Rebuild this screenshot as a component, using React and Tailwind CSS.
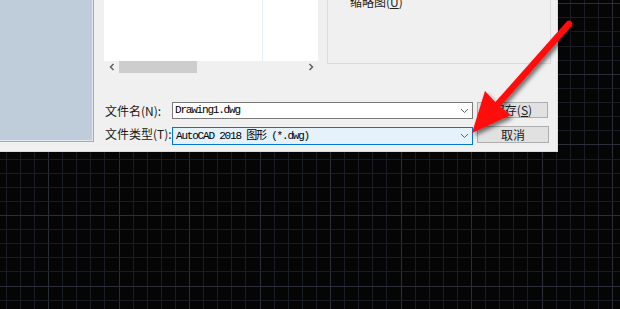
import React from 'react';

const cjk = { fontFamily: '"Noto Sans CJK SC", "Noto Sans", sans-serif' };
const mono = { fontFamily: '"Liberation Mono", "Noto Sans CJK SC", monospace' };

const Chevron = () => (
  <svg width="9" height="6" viewBox="0 0 9 6" className="shrink-0">
    <path d="M1 1 L4.5 4.5 L8 1" fill="none" stroke="#606060" strokeWidth="1" />
  </svg>
);

const Grid = () => {
  const xs = [];
  const ys = [];
  for (let j = -5; j < 46; j++) xs.push({ v: 48 + j * 14.1, major: j % 5 === 0 });
  for (let j = -5; j < 24; j++) ys.push({ v: 3.2 + j * 14.12, major: j % 5 === 0 });
  return (
    <svg className="absolute inset-0" width="620" height="309">
      {xs.map((l, i) => (
        <line key={'x' + i} x1={Math.round(l.v) + 0.5} y1="0" x2={Math.round(l.v) + 0.5} y2="309" stroke={l.major ? '#2b2e39' : '#1a1c23'} strokeWidth="1" />
      ))}
      {ys.map((l, i) => (
        <line key={'y' + i} x1="0" y1={Math.round(l.v) + 0.5} x2="620" y2={Math.round(l.v) + 0.5} stroke={l.major ? '#2b2e39' : '#1a1c23'} strokeWidth="1" />
      ))}
    </svg>
  );
};

const Arrow = () => (
  <svg className="absolute inset-0 pointer-events-none" width="620" height="309">
    <defs>
      <filter id="sh" x="-20%" y="-20%" width="150%" height="150%">
        <feDropShadow dx="2" dy="3" stdDeviation="2" floodColor="#000" floodOpacity="0.55" />
      </filter>
    </defs>
    <g filter="url(#sh)" fill="#ff0a0a">
      <line x1="569" y1="24" x2="498" y2="104" stroke="#ff0a0a" strokeWidth="6.5" strokeLinecap="round" />
      <polygon points="472,133 485,91 498,105 511,115" />
    </g>
  </svg>
);

export default function App() {
  return (
    <div className="relative w-[620px] h-[309px] overflow-hidden bg-[#050506]">
      <Grid />

      {/* dialog */}
      <div className="absolute left-0 top-0 w-[558px] h-[152px] bg-[#f0f0f0] border-r border-b border-[#dadada] flex text-[12px] text-[#1a1a1a]" style={cjk}>
        <div className="w-[94px] h-[142px] shrink-0 bg-[#bfcddb] border-r border-b border-[#9eacbc] shadow-[inset_-1px_-1px_0_#dfe7ef]" />

        <div className="ml-[10px] flex flex-col">
          <div className="flex">
            <div className="w-[214px] flex flex-col">
              <div className="h-[61px] bg-white flex">
                <div className="w-[159px] border-r border-[#e6eff9]" />
              </div>
              <div className="h-[12px] flex items-center">
                <span className="w-[15px] flex justify-center">
                  <svg width="6" height="8" viewBox="0 0 6 8"><path d="M4.5 1 L1.5 4 L4.5 7" fill="none" stroke="#606060" strokeWidth="1.5" /></svg>
                </span>
                <div className="w-[78px] h-[12px] bg-[#cdcdcd]" />
                <div className="flex-1" />
                <span className="w-[15px] flex justify-center">
                  <svg width="6" height="8" viewBox="0 0 6 8"><path d="M1.5 1 L4.5 4 L1.5 7" fill="none" stroke="#606060" strokeWidth="1.5" /></svg>
                </span>
              </div>
            </div>
            <div className="ml-[9px] w-[224px] h-[64px] border border-t-0 border-[#dcdcdc] overflow-hidden">
              <div className="ml-[22px] -mt-[6px] leading-4 text-[#222]">缩略图(<span className="underline">U</span>)</div>
            </div>
          </div>

          <div className="mt-[29px] flex items-start">
            <div className="w-[68px] pl-px h-[17px] leading-[17px]">文件名(N):</div>
            <div className="w-[301px] h-[17px] bg-white border border-[#7a7a7a] flex items-center pl-[2px] pr-[3px]">
              <span className="flex-1 text-[11px] tracking-[-1.2px] text-black" style={mono}>Drawing1.dwg</span>
              <Chevron />
            </div>
            <div className="ml-[4px] w-[71px] h-[16px] bg-[#e1e1e1] border border-[#adadad] flex items-center justify-center leading-none">
              保存(<span className="underline">S</span>)
            </div>
          </div>

          <div className="mt-[7px] flex items-start">
            <div className="w-[68px] pl-px h-[18px] leading-[16px]">文件类型(T):</div>
            <div className="w-[301px] h-[18px] mt-px bg-[#e5f1fb] border border-[#0078d7] flex items-center pl-[3px] pr-[3px]">
              <span className="flex-1 text-[11px] tracking-[-1.2px] text-black whitespace-pre" style={mono}>AutoCAD 2018 图形 (*.dwg)</span>
              <Chevron />
            </div>
            <div className="ml-[4px] w-[72px] h-[17px] bg-[#e1e1e1] border border-[#adadad] flex items-center justify-center leading-none">
              取消
            </div>
          </div>
        </div>
      </div>

      <Arrow />
    </div>
  );
}
